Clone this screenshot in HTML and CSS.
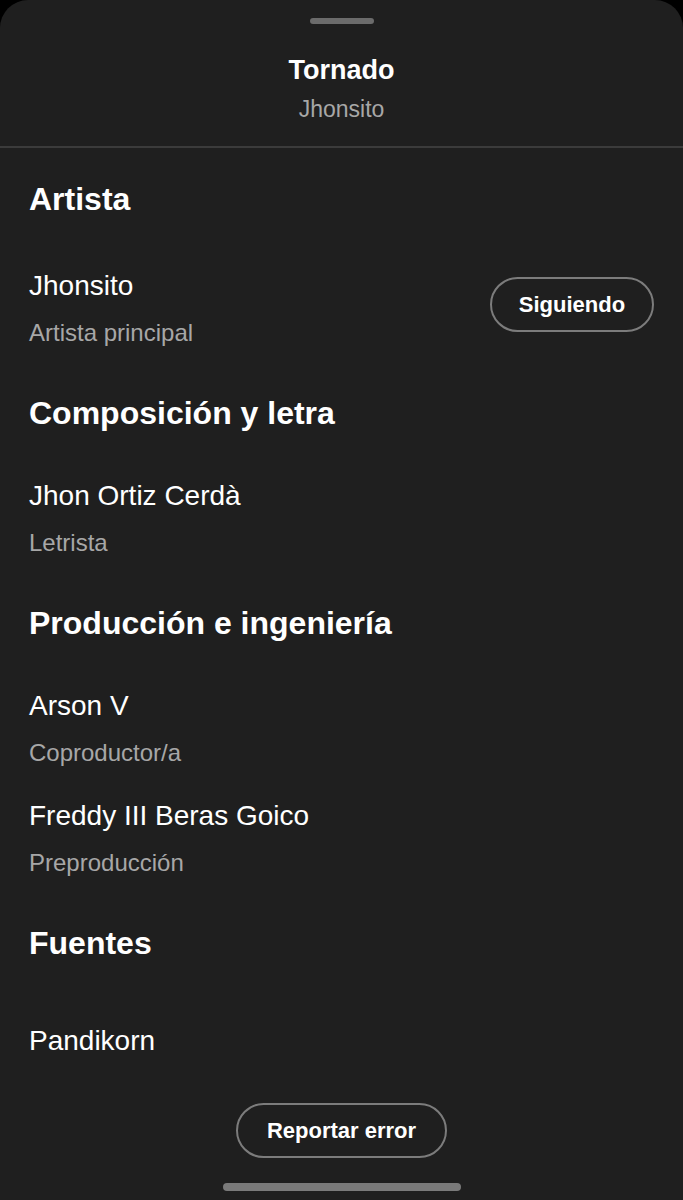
FILE: index.html
```html
<!DOCTYPE html>
<html lang="es">

<head>
    <meta charset="UTF-8">
    <meta name="viewport" content="width=device-width, initial-scale=1.0">
    <title>Créditos - Tornado</title>
    <link rel="stylesheet" href="styles.css">
</head>

<body>
    <div class="sheet">
        <header class="sheet-head">
            <div class="handle"></div>
            <h1 class="track-title">Tornado</h1>
            <p class="track-artist">Jhonsito</p>
        </header>

        <main class="credits">
            <section class="group">
                <h2 class="group-title">Artista</h2>
                <div class="row row-first">
                    <div class="info">
                        <div class="name">Jhonsito</div>
                        <div class="role">Artista principal</div>
                    </div>
                    <button type="button" class="pill pill-follow">Siguiendo</button>
                </div>
            </section>

            <section class="group">
                <h2 class="group-title">Composición y letra</h2>
                <div class="row">
                    <div class="info">
                        <div class="name">Jhon Ortiz Cerdà</div>
                        <div class="role">Letrista</div>
                    </div>
                </div>
            </section>

            <section class="group">
                <h2 class="group-title">Producción e ingeniería</h2>
                <div class="row">
                    <div class="info">
                        <div class="name">Arson V</div>
                        <div class="role">Coproductor/a</div>
                    </div>
                </div>
                <div class="row">
                    <div class="info">
                        <div class="name">Freddy III Beras Goico</div>
                        <div class="role">Preproducción</div>
                    </div>
                </div>
            </section>

            <section class="group">
                <h2 class="group-title">Fuentes</h2>
                <div class="row row-single">
                    <div class="info">
                        <div class="name">Pandikorn</div>
                    </div>
                </div>
            </section>
        </main>

        <div class="report">
            <button type="button" class="pill pill-report">Reportar error</button>
        </div>

        <div class="home-bar"></div>
    </div>
</body>

</html>
```

FILE: styles.css
```css
* {
    box-sizing: border-box;
}

body {
    margin: 0;
    background-color: #000;
    font-family: "Liberation Sans", Arial, sans-serif;
    color: #fff;
}

.sheet {
    width: 683px;
    height: 1200px;
    background-color: #1f1f1f;
    border-radius: 28px 28px 0 0;
    overflow: hidden;
}

/* header */

.sheet-head {
    display: flex;
    flex-direction: column;
    align-items: center;
    padding-top: 18px;
    padding-bottom: 23px;
    border-bottom: 2px solid #3b3b3b;
}

.handle {
    width: 64px;
    height: 6px;
    border-radius: 3px;
    background-color: #6b6b6b;
}

.track-title {
    margin: 30px 0 0;
    font-size: 27px;
    line-height: 32px;
    font-weight: bold;
}

.track-artist {
    margin: 9px 0 0;
    font-size: 23px;
    line-height: 28px;
    color: #a7a7a7;
}

/* credit list */

.credits {
    padding: 0 29px;
}

.group-title {
    margin: 45px 0 0;
    font-size: 32px;
    line-height: 40px;
    font-weight: bold;
}

.group:first-child .group-title {
    margin-top: 31px;
}

.row {
    display: flex;
    align-items: center;
    justify-content: space-between;
    margin-top: 32px;
}

.group-title + .row {
    margin-top: 47px;
}

.group-title + .row-first {
    margin-top: 51px;
    align-items: flex-start;
}

.group-title + .row-single {
    margin-top: 62px;
}

.name {
    font-size: 28px;
    line-height: 32px;
}

.role {
    margin-top: 16px;
    font-size: 24px;
    line-height: 30px;
    color: #a7a7a7;
}

/* buttons */

.pill {
    height: 55px;
    border: 2px solid #7c7c7c;
    border-radius: 28px;
    background: transparent;
    color: #fff;
    font-family: "Liberation Sans", Arial, sans-serif;
    font-size: 22px;
    font-weight: bold;
}

.pill-follow {
    width: 164px;
    margin-top: 7px;
}

.report {
    display: flex;
    justify-content: center;
    margin-top: 46px;
}

.pill-report {
    width: 211px;
}

.home-bar {
    width: 238px;
    height: 8px;
    margin: 25px auto 0;
    border-radius: 4px;
    background-color: #7a7a7a;
}
```
